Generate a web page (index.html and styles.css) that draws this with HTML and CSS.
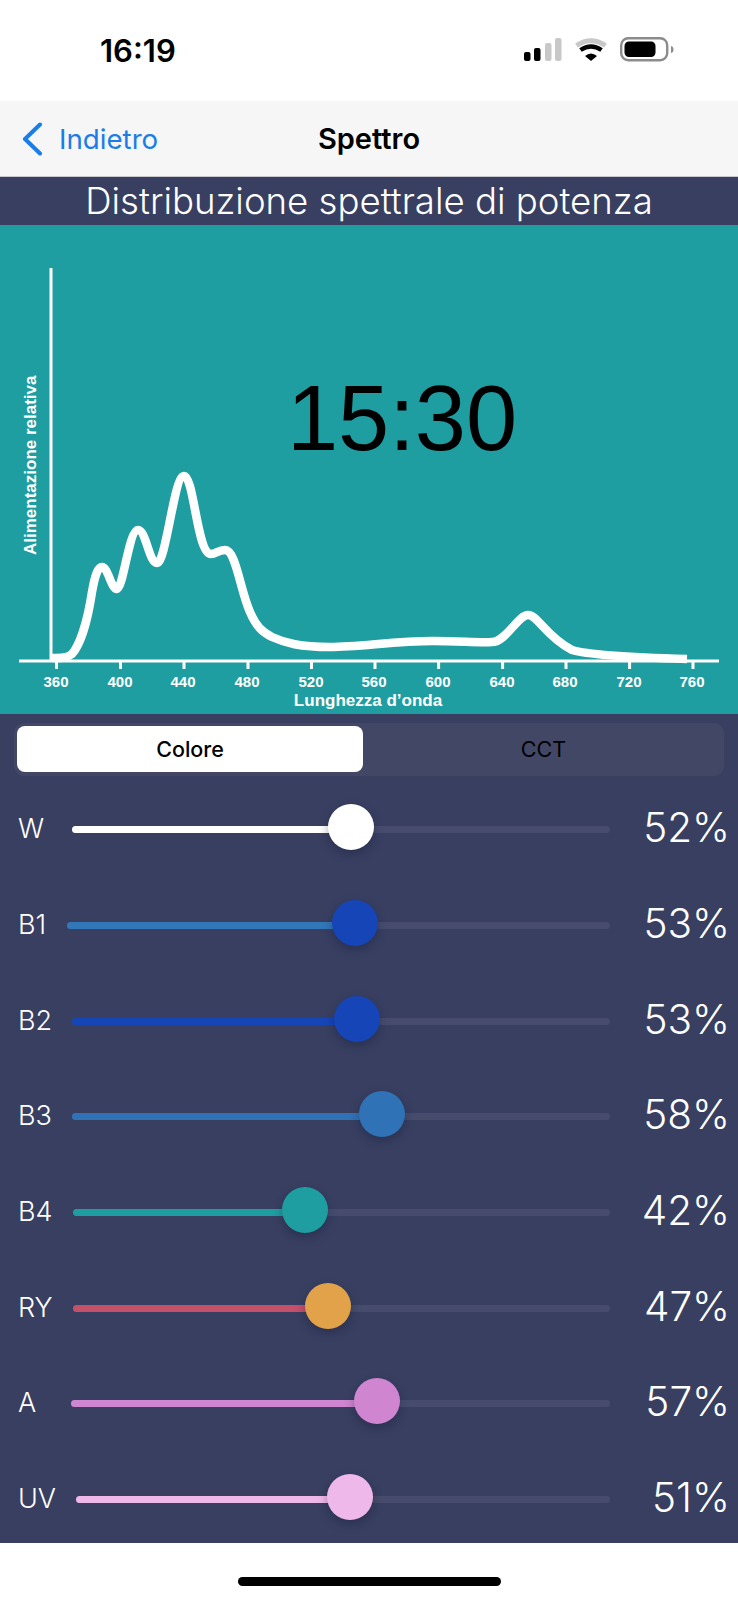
FILE: index.html
```html
<!DOCTYPE html>
<html lang="it">
<head>
    <meta charset="UTF-8">
    <meta name="viewport" content="width=device-width, initial-scale=1.0">
    <title>Spettro</title>
    <link rel="stylesheet" href="styles.css">
</head>
<body>
    <div class="status">
        <span class="status_time">16:19</span>
        <svg class="status_icons" width="152" height="28" viewBox="0 0 152 28">
            <rect x="0" y="15" width="6.500" height="9" rx="2" fill="#000"/>
            <rect x="10" y="11" width="6.500" height="13" rx="2" fill="#000"/>
            <rect x="21" y="6" width="6.500" height="18" rx="2" fill="#c8c8c8"/>
            <rect x="31" y="1" width="6.500" height="23" rx="2" fill="#c8c8c8"/>
            <path d="M52.500 8.500Q67 -1 81.500 8.500" fill="none" stroke="#c8c8c8" stroke-width="5"/>
            <path d="M56.500 13Q67 6 77.500 13" fill="none" stroke="#000" stroke-width="4.500"/>
            <path d="M61 19Q67 14 73 19L67 24z" fill="#000"/>
            <rect x="97.200" y="1.200" width="46" height="22" rx="7" fill="#fff" stroke="#8c8c8c" stroke-width="2.400"/>
            <rect x="100.500" y="4.500" width="31" height="15.500" rx="4.500" fill="#000"/>
            <path d="M147 9c2 .5 2.500 2 2.500 3.500s-.5 3-2.500 3.500z" fill="#8c8c8c"/>
        </svg>
    </div>

    <div class="nav">
        <div class="nav_back">
            <svg width="22" height="34" viewBox="0 0 22 34">
                <path d="M19 2.500L4 17l15 14.500" fill="none" stroke="#1a7de8" stroke-width="4" stroke-linecap="round" stroke-linejoin="round"/>
            </svg>
            <span>Indietro</span>
        </div>
        <div class="nav_title">Spettro</div>
    </div>

    <h1 class="heading">Distribuzione spettrale di potenza</h1>

    <svg class="chart" width="738" height="489" viewBox="0 225 738 489">
        <text class="chart_time" x="402" y="450" text-anchor="middle">15:30</text>
        <text class="chart_ylabel" transform="translate(36 555) rotate(-90)">Alimentazione relativa</text>

        <path class="chart_line" d="M51 268V661"/>
        <path class="chart_line" d="M19 661H719"/>
        <path class="chart_line" d="M56.500 661v8M120.500 661v8M184 661v8M248 661v8M311.500 661v8M375 661v8M438.600 661v8M502.600 661v8M566 661v8M629.600 661v8M693 661v8"/>

        <path class="chart_curve" d="M52 658C62 658 67 658 72 654C79 646 87 625 92 592C95 575 98 567 102 567C108 567 111 589 117 589C123 589 129 530 138 530C146 530 149 563 157 563C166 563 174 476 184 476C194 476 197 554 211 554C216 554 218 550 225 550C236 550 240 590 250 612C256 626 262 632 272 637C285 643 300 647 330 647C360 647 395 641 433 641C460 641 480 643 492 642C506 642 518 615 528 615C538 615 545 636 572 650C585 654 620 657 687 659"/>

        <g class="chart_ticks" text-anchor="middle">
            <text x="56" y="687">360</text>
            <text x="120" y="687">400</text>
            <text x="183" y="687">440</text>
            <text x="247" y="687">480</text>
            <text x="311" y="687">520</text>
            <text x="374" y="687">560</text>
            <text x="438" y="687">600</text>
            <text x="502" y="687">640</text>
            <text x="565" y="687">680</text>
            <text x="629" y="687">720</text>
            <text x="692" y="687">760</text>
        </g>
        <text class="chart_xlabel" x="368" y="706" text-anchor="middle">Lunghezza d’onda</text>
    </svg>

    <div class="panel">
        <div class="tabs">
            <div class="tab tab_on">Colore</div>
            <div class="tab">CCT</div>
        </div>

        <div class="sliders">
            <div class="row ch_w">
                <span class="row_name">W</span>
                <div class="track">
                    <div class="fill" style="width:51.900%"></div>
                    <div class="thumb" style="left:51.900%"></div>
                </div>
                <span class="row_val">52%</span>
            </div>
            <div class="row ch_b1">
                <span class="row_name">B1</span>
                <div class="track">
                    <div class="fill" style="width:53%"></div>
                    <div class="thumb" style="left:53%"></div>
                </div>
                <span class="row_val">53%</span>
            </div>
            <div class="row ch_b2">
                <span class="row_name">B2</span>
                <div class="track">
                    <div class="fill" style="width:53%"></div>
                    <div class="thumb" style="left:53%"></div>
                </div>
                <span class="row_val">53%</span>
            </div>
            <div class="row ch_b3">
                <span class="row_name">B3</span>
                <div class="track">
                    <div class="fill" style="width:57.600%"></div>
                    <div class="thumb" style="left:57.600%"></div>
                </div>
                <span class="row_val">58%</span>
            </div>
            <div class="row ch_b4">
                <span class="row_name">B4</span>
                <div class="track">
                    <div class="fill" style="width:43.200%"></div>
                    <div class="thumb" style="left:43.200%"></div>
                </div>
                <span class="row_val">42%</span>
            </div>
            <div class="row ch_ry">
                <span class="row_name">RY</span>
                <div class="track">
                    <div class="fill" style="width:47.500%"></div>
                    <div class="thumb" style="left:47.500%"></div>
                </div>
                <span class="row_val">47%</span>
            </div>
            <div class="row ch_a">
                <span class="row_name">A</span>
                <div class="track">
                    <div class="fill" style="width:56.800%"></div>
                    <div class="thumb" style="left:56.800%"></div>
                </div>
                <span class="row_val">57%</span>
            </div>
            <div class="row ch_uv">
                <span class="row_name">UV</span>
                <div class="track">
                    <div class="fill" style="width:51.400%"></div>
                    <div class="thumb" style="left:51.400%"></div>
                </div>
                <span class="row_val">51%</span>
            </div>
        </div>
    </div>

    <div class="home"><div class="home_bar"></div></div>
</body>
</html>
```

FILE: styles.css
```css
*{
    box-sizing: border-box;
}
body{
    margin: 0;
    width: 738px;
    height: 1600px;
    background-color: #fff;
    font-family: Inter, "Liberation Sans", sans-serif;
    overflow: hidden;
}

/* status bar */
.status{
    height: 101px;
    padding: 36px 62px 0 100px;
    display: flex;
    justify-content: space-between;
    align-items: flex-start;
}
.status_time{
    font-size: 31px;
    font-weight: 600;
    line-height: 29px;
    color: #000;
}
.status_icons{
    margin-top: 1px;
}

/* nav */
.nav{
    height: 76px;
    background-color: #f6f6f6;
    border-bottom: 1px solid #c8c8cc;
    position: relative;
    display: flex;
    align-items: center;
    justify-content: center;
}
.nav_back{
    position: absolute;
    left: 21px;
    top: 21px;
    display: flex;
    align-items: center;
    gap: 16px;
    font-size: 27.700px;
    color: #1a7de8;
}
.nav_title{
    font-size: 29px;
    font-weight: 600;
    color: #000;
}

.heading{
    margin: 0;
    height: 48px;
    background-color: #383f61;
    color: #fff;
    font-size: 36.600px;
    font-weight: 300;
    line-height: 48px;
    text-align: center;
}

/* chart */
.chart{
    display: block;
    background-color: #1f9ea2;
}
.chart_line{
    fill: none;
    stroke: #fff;
    stroke-width: 3;
}
.chart_curve{
    fill: none;
    stroke: #fff;
    stroke-width: 8.500;
    stroke-linejoin: round;
}
.chart_time{
    font-family: "Liberation Sans", sans-serif;
    font-size: 92px;
    fill: #000;
}
.chart_ylabel{
    font-family: "Liberation Sans", sans-serif;
    font-size: 17px;
    font-weight: 700;
    fill: #fff;
}
.chart_ticks{
    font-family: "Liberation Sans", sans-serif;
    font-size: 15px;
    font-weight: 700;
    fill: #fff;
}
.chart_xlabel{
    font-family: "Liberation Sans", sans-serif;
    font-size: 17px;
    font-weight: 700;
    fill: #fff;
}

/* tabs + sliders */
.panel{
    height: 829px;
    background-color: #383f61;
    padding-top: 9px;
}
.tabs{
    margin: 0 14px;
    height: 53px;
    border-radius: 10px;
    background-color: #424766;
    padding: 3px 0 4px 3px;
    display: flex;
}
.tab{
    flex: 1;
    display: flex;
    align-items: center;
    justify-content: center;
    font-size: 21.500px;
    font-weight: 400;
    color: #000;
}
.tab_on{
    flex: 0 0 346px;
    background-color: #fff;
    border-radius: 8px;
    font-weight: 500;
}
.sliders{
    margin-top: 6px;
    display: flex;
    flex-direction: column;
}
.row{
    height: 95.700px;
    padding: 0 8px 0 18px;
    display: flex;
    align-items: center;
    color: #fff;
}
.row_name{
    flex: 0 0 var(--start);
    font-size: 27px;
    font-weight: 300;
    margin-bottom: 2px;
}
.track{
    flex: 1;
    height: 7px;
    border-radius: 4px;
    background-color: #474c6d;
    position: relative;
}
.fill{
    height: 7px;
    border-radius: 4px 0 0 4px;
    background-color: var(--fill);
}
.thumb{
    position: absolute;
    top: -22px;
    width: 46px;
    height: 46px;
    margin-left: -23px;
    border-radius: 50%;
    background-color: var(--knob);
    box-shadow: 0 4px 10px rgba(20, 24, 50, .35);
}
.row_val{
    flex: 0 0 120px;
    font-size: 40.500px;
    font-weight: 300;
    text-align: right;
    margin-bottom: 4px;
}

.ch_w{ --start: 53.500px; --fill: #fff; --knob: #fff; }
.ch_b1{ --start: 49px; --fill: #3277b8; --knob: #1645b8; }
.ch_b2{ --start: 54px; --fill: #1645b8; --knob: #1645b8; }
.ch_b3{ --start: 54px; --fill: #2f72b5; --knob: #2f72b5; }
.ch_b4{ --start: 55px; --fill: #1f9ea2; --knob: #1f9ea2; }
.ch_ry{ --start: 55px; --fill: #c4506a; --knob: #e2a24a; }
.ch_a{ --start: 52.500px; --fill: #cf85cf; --knob: #cf85cf; }
.ch_uv{ --start: 58px; --fill: #efb8ea; --knob: #efb8ea; }

/* bottom */
.home{
    height: 57px;
    padding-top: 34px;
    display: flex;
    justify-content: center;
}
.home_bar{
    width: 263px;
    height: 9px;
    border-radius: 5px;
    background-color: #000;
}
```
